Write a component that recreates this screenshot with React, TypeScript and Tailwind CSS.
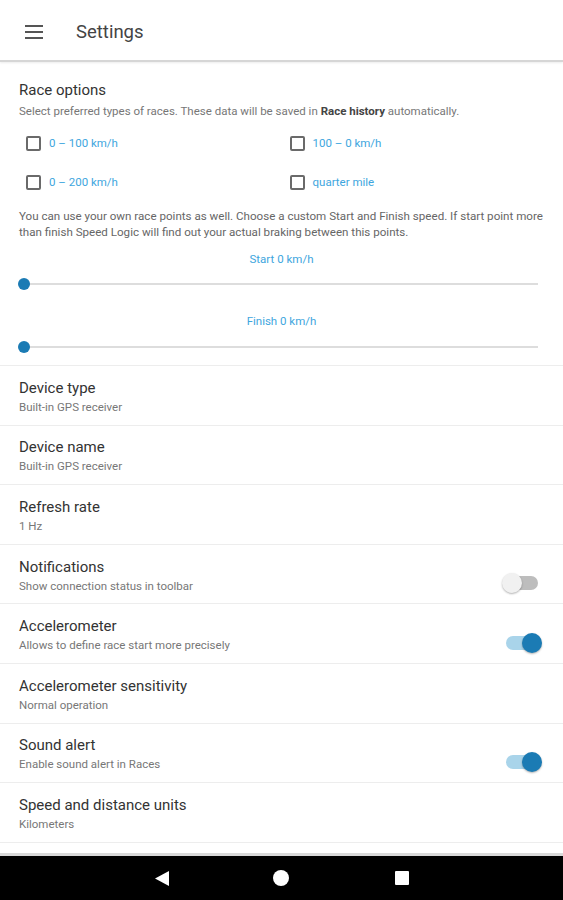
import React from "react";

function Toggle({ on }: { on: boolean }) {
  return (
    <div className="relative w-[40px] h-[20px] shrink-0">
      <div
        className={
          "absolute left-[4px] top-[3px] w-[32px] h-[14px] rounded-full " +
          (on ? "bg-[#a9d4ea]" : "bg-[#bdbdbd]")
        }
      />
      <div
        className={
          "absolute top-0 w-[20px] h-[20px] rounded-full shadow-[0_1px_2px_rgba(0,0,0,0.3)] " +
          (on ? "left-[20px] bg-[#1b7bb4]" : "left-0 bg-[#f1f1f1]")
        }
      />
    </div>
  );
}

function Item({ title, sub, toggle }: { title: string; sub: string; toggle?: boolean }) {
  return (
    <div className="h-[59.6px] border-b border-[#ededed] flex items-center pl-[19px] pr-[21px]">
      <div className="flex-1 pt-[2px]">
        <div className="text-[15px] leading-[20px] text-[#333]">{title}</div>
        <div className="text-[11.5px] leading-[16px] text-[#777] mt-[1px]">{sub}</div>
      </div>
      {toggle !== undefined && (
        <div className="mt-[18px]">
          <Toggle on={toggle} />
        </div>
      )}
    </div>
  );
}

function Check({ label }: { label: string }) {
  return (
    <div className="flex items-center h-[39px]">
      <div className="w-[15px] h-[15px] border-2 border-[#6a6a6a] rounded-[2px] shrink-0" />
      <span className="ml-[8px] text-[11.5px] text-[#3ea6de]">{label}</span>
    </div>
  );
}

function Slider() {
  return (
    <div className="relative h-[12px] mx-[18px]">
      <div className="absolute left-[6px] right-[7px] top-[5px] h-[2px] bg-[#dddddd]" />
      <div className="absolute left-0 top-0 w-[12px] h-[12px] rounded-full bg-[#1b7bb4]" />
    </div>
  );
}

export default function App() {
  return (
    <div
      className="w-[563px] h-[900px] bg-white flex flex-col overflow-hidden"
      style={{ fontFamily: "Roboto, 'Noto Sans', sans-serif" }}
    >
      <header className="h-[62px] shrink-0 flex items-center border-b-2 border-[#d6d6d6] shadow-[0_1px_2px_rgba(0,0,0,0.08)]">
        <div className="ml-[25px] w-[18px] flex flex-col gap-[4px] mt-[3px]">
          <div className="h-[2px] bg-[#555]" />
          <div className="h-[2px] bg-[#555]" />
          <div className="h-[2px] bg-[#555]" />
        </div>
        <div className="ml-[33px] text-[18.5px] text-[#444] mt-[5px]">Settings</div>
      </header>

      <div className="flex-1 overflow-hidden">
        <section className="border-b border-[#ededed] pb-[12px]">
          <div className="pl-[19px] pt-[18px]">
            <div className="text-[15px] leading-[20px] text-[#333]">Race options</div>
            <div className="text-[11.5px] leading-[16px] text-[#777] mt-[3px]">
              Select preferred types of races. These data will be saved in{" "}
              <span className="font-bold text-[#444]">Race history</span> automatically.
            </div>
          </div>
          <div className="grid grid-cols-2 pl-[26px] pr-[10px] mt-[5px]">
            <Check label="0 – 100 km/h" />
            <Check label="100 – 0 km/h" />
            <Check label="0 – 200 km/h" />
            <Check label="quarter mile" />
          </div>
          <div className="pl-[19px] pr-[10px] mt-[6px] text-[11.6px] leading-[16px] text-[#666]">
            You can use your own race points as well. Choose a custom Start and Finish speed. If start point more
            <br />
            than finish Speed Logic will find out your actual braking between this points.
          </div>
          <div className="mt-[11px] text-center text-[11.5px] leading-[16px] text-[#3ea6de]">Start 0 km/h</div>
          <div className="mt-[11px]">
            <Slider />
          </div>
          <div className="mt-[23px] text-center text-[11.5px] leading-[16px] text-[#3ea6de]">Finish 0 km/h</div>
          <div className="mt-[12px]">
            <Slider />
          </div>
        </section>

        <Item title="Device type" sub="Built-in GPS receiver" />
        <Item title="Device name" sub="Built-in GPS receiver" />
        <Item title="Refresh rate" sub="1 Hz" />
        <Item title="Notifications" sub="Show connection status in toolbar" toggle={false} />
        <Item title="Accelerometer" sub="Allows to define race start more precisely" toggle={true} />
        <Item title="Accelerometer sensitivity" sub="Normal operation" />
        <Item title="Sound alert" sub="Enable sound alert in Races" toggle={true} />
        <Item title="Speed and distance units" sub="Kilometers" />
      </div>

      <div className="h-[3px] bg-[#d9d9d9] shrink-0" />
      <nav className="h-[44px] bg-black shrink-0 flex items-center">
        <svg className="ml-[155px]" width="14" height="15" viewBox="0 0 14 15">
          <polygon points="14,0 14,15 0,7.5" fill="white" />
        </svg>
        <div className="ml-[104px] w-[16px] h-[16px] rounded-full bg-white" />
        <div className="ml-[106px] w-[14px] h-[14px] rounded-[1px] bg-white" />
      </nav>
    </div>
  );
}
